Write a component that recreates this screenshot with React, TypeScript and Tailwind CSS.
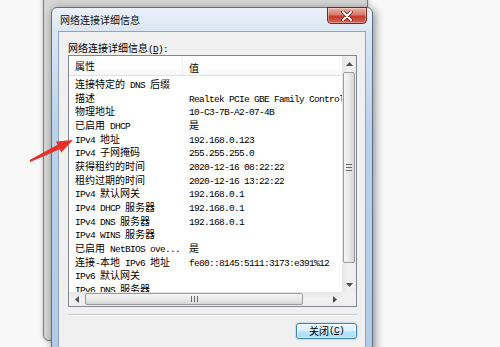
import React from "react";

const CJK = /([\u3000-\u9fff\uff00-\uffef]+)/;

function T({ s }: { s: string }) {
  const parts = s.split(CJK).filter((p) => p.length > 0);
  return (
    <>
      {parts.map((p, i) =>
        CJK.test(p) ? (
          <span key={i} className="font-['Noto_Sans_CJK_SC',sans-serif] text-[10px]">
            {p}
          </span>
        ) : (
          <span
            key={i}
            className="font-['Liberation_Mono','Noto_Sans_CJK_SC',monospace] text-[9.5px] tracking-[-0.7px] whitespace-pre"
          >
            {p}
          </span>
        )
      )}
    </>
  );
}

const rows: [string, string][] = [
  ["连接特定的 DNS 后缀", ""],
  ["描述", "Realtek PCIe GBE Family Controller"],
  ["物理地址", "10-C3-7B-A2-07-4B"],
  ["已启用 DHCP", "是"],
  ["IPv4 地址", "192.168.0.123"],
  ["IPv4 子网掩码", "255.255.255.0"],
  ["获得租约的时间", "2020-12-16 08:22:22"],
  ["租约过期的时间", "2020-12-16 13:22:22"],
  ["IPv4 默认网关", "192.168.0.1"],
  ["IPv4 DHCP 服务器", "192.168.0.1"],
  ["IPv4 DNS 服务器", "192.168.0.1"],
  ["IPv4 WINS 服务器", ""],
  ["已启用 NetBIOS ove...", "是"],
  ["连接-本地 IPv6 地址", "fe80::8145:5111:3173:e391%12"],
  ["IPv6 默认网关", ""],
  ["IPv6 DNS 服务器", ""],
];

function Arrow({ dir }: { dir: "up" | "down" | "left" | "right" }) {
  const d =
    dir === "up"
      ? "M0 4 L3.5 0 L7 4Z"
      : dir === "down"
      ? "M0 0 L3.5 4 L7 0Z"
      : dir === "left"
      ? "M4 0 L0 3.5 L4 7Z"
      : "M0 0 L4 3.5 L0 7Z";
  const w = dir === "up" || dir === "down" ? 7 : 4;
  const h = dir === "up" || dir === "down" ? 4 : 7;
  return (
    <svg width={w} height={h} viewBox={`0 0 ${w} ${h}`}>
      <path d={d} fill="#505050" />
    </svg>
  );
}

export default function App() {
  return (
    <div className="relative w-[500px] h-[347px] overflow-hidden bg-[#f8f8f8]">
      {/* window behind */}
      <div className="absolute left-[43px] top-[-20px] w-[325px] h-[361px] rounded-b-[6px] border border-[#7d7d7d] bg-[#d6d6d6] shadow-[0_0_4px_rgba(0,0,0,0.25)]" />

      {/* dialog window */}
      <div className="absolute left-[51px] top-[7px] w-[322px] h-[360px] rounded-t-[6px] border border-[#5d6f86] bg-[linear-gradient(180deg,#eaf1f9_0px,#dae6f3_24px,#bcd1ea_120px,#b3cae6_360px)] shadow-[2px_2px_10px_rgba(0,0,0,0.45)] flex flex-col">
        {/* title bar */}
        <div className="relative h-[23px] flex items-center pl-[8px] text-[#111]">
          <T s="网络连接详细信息" />
          <div className="absolute right-[5px] top-[-1px] w-[40px] h-[17px] rounded-b-[4px] border border-[#6e2a22] bg-[linear-gradient(180deg,#eab0a4_0%,#d9796a_45%,#c43b2b_55%,#d6634f_100%)] flex items-center justify-center shadow-[inset_0_0_0_1px_rgba(255,255,255,0.35)]">
            <svg width="12" height="10" viewBox="0 0 12 10">
              <path d="M2 1 L10 9 M10 1 L2 9" stroke="#5a1d16" strokeWidth="3.4" strokeLinecap="round" />
              <path d="M2 1 L10 9 M10 1 L2 9" stroke="#ffffff" strokeWidth="2" strokeLinecap="round" />
            </svg>
          </div>
        </div>

        {/* client area */}
        <div className="mx-[6px] flex-1 border border-[#8fa3bd] bg-[#f0f0f0] pt-[7px] pl-[9px] pr-[8px] text-black">
          <div className="h-[14px] leading-[14px] whitespace-nowrap">
            <T s="网络连接详细信息(" />
            <span className="font-['Liberation_Mono',monospace] text-[9.5px] tracking-[-0.7px] underline">D</span>
            <T s="):" />
          </div>

          {/* list view */}
          <div className="mt-[2px] w-[289px] h-[252px] border border-[#828790] bg-white grid grid-cols-[273px_14px] grid-rows-[236px_14px]">
            {/* content */}
            <div className="overflow-hidden">
              <div className="h-[20px] flex items-center border-b border-[#e3e3e3] bg-[linear-gradient(180deg,#ffffff_0%,#ffffff_60%,#f4f6f8_100%)] whitespace-nowrap">
                <div className="w-[114px] shrink-0 pl-[6px] h-full flex items-center border-r border-[#eceff2]">
                  <T s="属性" />
                </div>
                <div className="pl-[6px]">
                  <T s="值" />
                </div>
              </div>
              {rows.map(([k, v], i) => (
                <div key={i} className="h-[13.67px] leading-[13.67px] flex whitespace-nowrap">
                  <div className="w-[114px] shrink-0 pl-[6px] overflow-hidden">
                    <T s={k} />
                  </div>
                  <div className="pl-[6px]">
                    <T s={v} />
                  </div>
                </div>
              ))}
            </div>

            {/* vertical scrollbar */}
            <div className="flex flex-col bg-[linear-gradient(90deg,#e6e6e6_0%,#f2f2f2_50%,#ececec_100%)]">
              <div className="h-[15px] flex items-center justify-center">
                <Arrow dir="up" />
              </div>
              <div className="mt-[1px] mx-[1px] h-[191px] rounded-[2px] border border-[#9c9c9c] bg-[linear-gradient(90deg,#f6f6f6_0%,#e9e9e9_50%,#d6d6d6_100%)] flex flex-col items-center justify-center gap-[2px]">
                <div className="w-[6px] h-[1px] bg-[#6a6a6a]" />
                <div className="w-[6px] h-[1px] bg-[#6a6a6a]" />
                <div className="w-[6px] h-[1px] bg-[#6a6a6a]" />
              </div>
              <div className="flex-1" />
              <div className="h-[15px] flex items-center justify-center">
                <Arrow dir="down" />
              </div>
            </div>

            {/* horizontal scrollbar */}
            <div className="flex bg-[linear-gradient(180deg,#e6e6e6_0%,#f2f2f2_50%,#ececec_100%)]">
              <div className="w-[15px] flex items-center justify-center">
                <Arrow dir="left" />
              </div>
              <div className="ml-[1px] my-[1px] w-[218px] rounded-[2px] border border-[#9c9c9c] bg-[linear-gradient(180deg,#f6f6f6_0%,#e9e9e9_50%,#d6d6d6_100%)] flex items-center justify-center gap-[2px]">
                <div className="w-[1px] h-[6px] bg-[#6a6a6a]" />
                <div className="w-[1px] h-[6px] bg-[#6a6a6a]" />
                <div className="w-[1px] h-[6px] bg-[#6a6a6a]" />
              </div>
              <div className="flex-1" />
              <div className="w-[15px] flex items-center justify-center">
                <Arrow dir="right" />
              </div>
            </div>

            {/* corner */}
            <div className="bg-[#f0f0f0]" />
          </div>

          {/* separator */}
          <div className="mt-[7px] w-[289px] h-[2px] border-t border-[#c8c8c8] border-b border-b-white" />

          {/* button */}
          <div className="mt-[7px] flex justify-end">
            <div className="w-[61px] h-[16px] rounded-[3px] border border-[#3c7fb1] bg-[linear-gradient(180deg,#eaf6fd_0%,#d9f0fc_50%,#bee6fd_51%,#a7d9f5_100%)] shadow-[0_0_2px_rgba(80,170,230,0.8),inset_0_0_0_1px_rgba(255,255,255,0.6)] flex items-center justify-center leading-[14px] whitespace-nowrap">
              <T s="关闭(" />
              <span className="font-['Liberation_Mono',monospace] text-[9.5px] tracking-[-0.7px] underline">C</span>
              <T s=")" />
            </div>
          </div>
        </div>
      </div>

      {/* red arrow annotation */}
      <svg className="absolute left-0 top-0" width="100" height="200" viewBox="0 0 100 200">
        <polygon
          points="73,140 61.2,152.4 59.7,149.2 30.4,161.9 29.6,160.1 57.5,144.8 56,141.6"
          fill="#e8312b"
        />
      </svg>
    </div>
  );
}
